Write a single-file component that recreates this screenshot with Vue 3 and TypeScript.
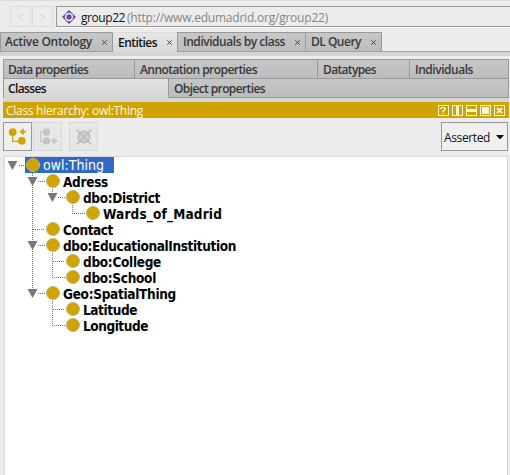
<script setup lang="ts">
interface Tab { label: string; width: number; text: number; active?: boolean }
interface TreeRow { label: string; depth: number; text: number; open?: boolean; selected?: boolean; guide: string }

const workspaceTabs: Tab[] = [
  { label: 'Active Ontology', width: 112, text: 86 },
  { label: 'Entities', width: 65, text: 38, active: true },
  { label: 'Individuals by class', width: 128, text: 101 },
  { label: 'DL Query', width: 77, text: 49 },
]
const upperTabs: Tab[] = [
  { label: 'Data properties', width: 131, text: 79 },
  { label: 'Annotation properties', width: 183, text: 116 },
  { label: 'Datatypes', width: 92, text: 52 },
  { label: 'Individuals', width: 99, text: 57 },
]
const lowerTabs: Tab[] = [
  { label: 'Classes', width: 165, text: 37, active: true },
  { label: 'Object properties', width: 340, text: 90 },
]
const rows: TreeRow[] = [
  { label: 'owl:Thing', depth: 0, text: 60, open: true, selected: true, guide: 'M18.5 8.5H25' },
  { label: 'Adress', depth: 1, text: 44, open: true, guide: 'M32.5 0V16M38 8.5H45' },
  { label: 'dbo:District', depth: 2, text: 76, open: true, guide: 'M32.5 0V16M52.5 0V4M58 8.5H65' },
  { label: 'Wards_of_Madrid', depth: 3, text: 118, guide: 'M32.5 0V16M72.5 0V8.5H85' },
  { label: 'Contact', depth: 1, text: 49, guide: 'M32.5 0V16M32.5 8.5H45' },
  { label: 'dbo:EducationalInstitution', depth: 1, text: 172, open: true, guide: 'M32.5 0V16M38 8.5H45' },
  { label: 'dbo:College', depth: 2, text: 77, guide: 'M32.5 0V16M52.5 0V16M52.5 8.5H65' },
  { label: 'dbo:School', depth: 2, text: 72, guide: 'M32.5 0V16M52.5 0V8.5H65' },
  { label: 'Geo:SpatialThing', depth: 1, text: 112, open: true, guide: 'M32.5 0V4M38 8.5H45' },
  { label: 'Latitude', depth: 2, text: 53, guide: 'M52.5 0V16M52.5 8.5H65' },
  { label: 'Longitude', depth: 2, text: 64, guide: 'M52.5 0V8.5H65' },
]

// Tracks a label out or in so that it occupies the given width.
const vFit = {
  mounted(el: HTMLElement, binding: { value: number }) {
    const count = (el.textContent ?? '').length
    const natural = el.getBoundingClientRect().width
    el.style.letterSpacing = `${(binding.value + 1 - natural) / count}px`
  },
}
</script>

<template>
  <main class="window">
    <header class="address-row">
      <div class="nav"><span>&lt;</span><span>&gt;</span></div>
      <div class="address">
        <svg width="14" height="14" viewBox="0 0 14 14"><path d="M7 0l2.500 2.500L11.500 4.500 14 7l-2.500 2.500L9.500 11.500 7 14l-2.500-2.500L2.500 9.500 0 7l2.500-2.500L4.500 2.500z" fill="#6a4a9e" /><circle cx="7" cy="7" r="3.4" fill="#6a4a9e" stroke="#f3eff8" stroke-width="1.5" /></svg>
        <span class="name"><span v-fit="43">group22</span></span>
        <span class="iri"><span v-fit="200">(http://www.edumadrid.org/group22)</span></span>
      </div>
    </header>

    <nav class="tabs">
      <div v-for="t in workspaceTabs" :key="t.label" class="tab" :class="{ active: t.active }" :style="{ width: t.width + 'px' }">
        <span v-fit="t.text">{{ t.label }}</span>
        <svg width="5" height="5" viewBox="0 0 5 5"><path d="M.3.3l4.4 4.4M4.7.3L.3 4.7" stroke="#444" stroke-width="1" /></svg>
      </div>
    </nav>
    <div class="band"></div>

    <section class="panel">
      <nav class="subtabs">
        <div v-for="t in upperTabs" :key="t.label" class="subtab" :style="{ width: t.width + 'px' }"><span v-fit="t.text">{{ t.label }}</span></div>
      </nav>
      <nav class="subtabs second">
        <div v-for="t in lowerTabs" :key="t.label" class="subtab" :class="{ active: t.active }" :style="{ width: t.width + 'px' }"><span v-fit="t.text">{{ t.label }}</span></div>
      </nav>
      <div class="gap"></div>
      <div class="title">
        <span v-fit="136">Class hierarchy: owl:Thing</span>
        <svg width="67" height="11" viewBox="0 0 67 11" fill="none" stroke="#fff8d8" shape-rendering="crispEdges">
          <path d="M.5.5h10v10H.5zM14.5.5h10v10h-10zM28.5.5h10v10h-10zM42.5.5h10v10h-10zM56.5.5h10v10h-10z" />
          <path d="M3 2h4v1H3zM2 3h2v1H2zM6 3h2v2H6zM5 5h2v1H5zM4 6h2v1H4zM4 8h2v1H4z" fill="#fff8d8" stroke="none" />
          <path d="M18 1h3v9h-3zM29 4h9v3h-9zM44 2h7v7h-7z" fill="#fff8d8" stroke="none" />
          <path d="M59 3l5 5M64 3l-5 5" stroke-width="1.8" shape-rendering="auto" />
        </svg>
      </div>

      <div class="toolbar">
        <button class="tool on"><svg width="27" height="27" viewBox="0 0 28 28" fill="none" stroke="#cfa300"><path d="M9 10v9h8" stroke-width="1.2" /><g fill="#cfa300" stroke="none"><circle cx="9" cy="9.500" r="4" /><circle cx="18.500" cy="18.500" r="4" /></g><path d="M16.500 9h6M19.500 6v6" stroke-width="2" /></svg></button>
        <button class="tool"><svg width="27" height="27" viewBox="0 0 28 28" fill="none" stroke="#c4c4c4"><path d="M10 9H7v10h3" stroke-width="1.2" /><g fill="#c4c4c4" stroke="none"><circle cx="13" cy="9.500" r="3.800" /><circle cx="13" cy="18.500" r="3.800" /></g><path d="M18 18.500h6M21 15.500v6" stroke-width="1.800" /></svg></button>
        <button class="tool apart"><svg width="27" height="27" viewBox="0 0 28 28"><circle cx="14.500" cy="14.500" r="6" fill="#d2d2d2" stroke="#bdbdbd" stroke-width="1.500" /><path d="M7 7l15 15M22 7L7 22" stroke="#b5b5b5" stroke-width="1.300" /></svg></button>
        <div class="select"><span v-fit="45">Asserted</span><svg width="8" height="4" viewBox="0 0 8 4"><path d="M0 0h8L4.500 4h-1z" /></svg></div>
      </div>

      <div class="tree">
        <div v-for="r in rows" :key="r.label" class="row">
          <svg class="lines" :width="36 + r.depth * 20" height="16">
            <g transform="translate(-5 0)">
              <path :d="r.guide" stroke="#777" fill="none" stroke-dasharray="1 1" shape-rendering="crispEdges" />
              <path v-if="r.open" :d="`M${7.5 + r.depth * 20} 4h10l-5 9z`" fill="#777" />
              <rect v-if="r.selected" x="25" y="0" width="16" height="16" fill="#316ac5" />
              <circle :cx="33 + r.depth * 20" cy="8" r="6.500" fill="#cfa300" stroke="#c7b56e" />
            </g>
          </svg>
          <span class="label" :class="{ selected: r.selected }"><span v-fit="r.text">{{ r.label }}</span></span>
        </div>
      </div>
    </section>
  </main>
</template>

<style>
body { margin: 0; overflow: hidden; background: #ececec; }
</style>
<style scoped>
* { box-sizing: border-box; }
.window { width: 510px; height: 475px; background: #ececec; font: 12px/16px "Open Sans", "Noto Sans", sans-serif; color: #383838; display: flex; flex-direction: column; overflow: hidden; white-space: nowrap; }
svg { display: block; flex: none; }
.address-row { height: 32px; flex: none; display: flex; padding: 5px 0 0 10px; border-top: 1px solid #dcdcdc; gap: 3px; }
.nav { display: flex; gap: 1px; }
.nav span { width: 21px; height: 21px; border: 1px solid #dcdcdc; color: #d2d2d2; text-align: center; line-height: 19px; font-size: 11px; }
.address { flex: 1; height: 21px; display: flex; align-items: center; border: 1px solid #999; border-right: 0; padding-left: 5px; box-shadow: 0 1px 0 #fafafa; }
.name { color: #111; width: 46px; margin-left: 5px; }
.iri { color: #858585; }
.name, .iri { padding-top: 2px; }
.tabs { display: flex; height: 20px; flex: none; border-bottom: 1px solid #a0a0a0; }
.tab { height: 19px; display: flex; align-items: center; justify-content: space-between; padding: 0 5px 0 4px; border: 1px solid #999; border-width: 1px 0 0 1px; background: linear-gradient(#c8c8c8, #bbb); font-weight: 600; }
.tab:last-child { border-right-width: 1px; padding-left: 5px; }
.tab:nth-child(3) { padding-left: 5px; }
.tab.active { height: 20px; background: linear-gradient(#e8e8e8, #d8d8d8); border-top-color: #ddd; color: #111; padding-left: 5px; }
.band { height: 4px; flex: none; background: #d4d4d4; }
.panel { flex: 1; padding: 3px 1px 0 3px; display: flex; flex-direction: column; min-height: 0; }
.subtabs { display: flex; height: 20px; flex: none; border: 1px solid #999; }
.second { height: 19px; border-top: 0; border-bottom: 0; }
.subtab { padding: 0 5px 0 4px; height: 18px; line-height: 19px; border-right: 1px solid #999; background: linear-gradient(#c6c6c6, #bcbcbc); font-weight: 600; flex: none; }
.subtab:not(:first-child) { padding-left: 5px; }
.subtab:last-child { border-right: 0; flex: 1; }
.second .subtab { height: 19px; border-bottom: 1px solid #999; }
.second .active { background: linear-gradient(#e2e2e2, #d5d5d5); color: #111; border-bottom: 0; }
.gap { height: 4px; flex: none; background: #d5d5d5; }
.title { height: 16px; flex: none; background: #cfa300; color: #fff8dc; display: flex; align-items: flex-start; justify-content: space-between; padding: 1px 4px 0 3px; }
.title svg { margin-top: 2px; }
.toolbar { height: 38px; flex: none; display: flex; align-items: flex-start; padding: 4px 1px 0 0; }
.tool { width: 29px; height: 29px; padding: 0; background: #e7e7e7; border: 1px solid #d7d7d7; margin-right: 1px; }
.tool.on { background: #f0f0f0; border-color: #999; }
.apart { margin-left: 6px; }
.select { margin-left: auto; width: 67px; height: 29px; border: 1px solid #999; background: #f0f0f0; display: flex; align-items: center; justify-content: space-between; padding: 3px 3px 0 2px; color: #111; }
.select svg { fill: #111; margin-bottom: 3px; }
.tree { flex: 1; margin-right: 1px; border: 1px solid #d6d6d6; border-width: 1px 1px 0; border-left: 2px solid #dedede; background: #fff; }
.row { height: 16px; display: flex; color: #000; font: bold 13.5px/17px "DejaVu Sans Condensed", "DejaVu Sans", sans-serif; font-stretch: condensed; }
.label { padding-left: 2px; height: 16px; line-height: 18px; }
.label.selected { background: #316ac5; color: #fff; font-weight: normal; font-size: 14px; line-height: 16px; width: 73px; }
</style>
